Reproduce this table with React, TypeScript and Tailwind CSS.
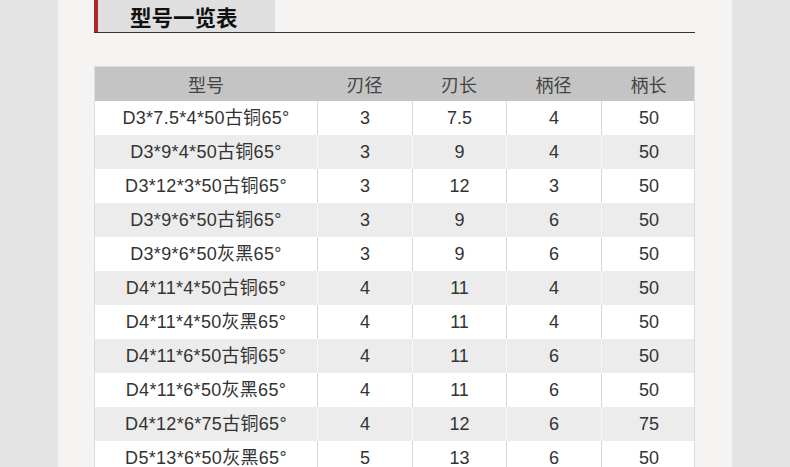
const rows = [
  ["D3*7.5*4*50古铜65°", "3", "7.5", "4", "50"],
  ["D3*9*4*50古铜65°", "3", "9", "4", "50"],
  ["D3*12*3*50古铜65°", "3", "12", "3", "50"],
  ["D3*9*6*50古铜65°", "3", "9", "6", "50"],
  ["D3*9*6*50灰黑65°", "3", "9", "6", "50"],
  ["D4*11*4*50古铜65°", "4", "11", "4", "50"],
  ["D4*11*4*50灰黑65°", "4", "11", "4", "50"],
  ["D4*11*6*50古铜65°", "4", "11", "6", "50"],
  ["D4*11*6*50灰黑65°", "4", "11", "6", "50"],
  ["D4*12*6*75古铜65°", "4", "12", "6", "75"],
  ["D5*13*6*50灰黑65°", "5", "13", "6", "50"],
];

const headers = ["型号", "刃径", "刃长", "柄径", "柄长"];
const cols = "grid grid-cols-[222px_95px_94px_95px_95px]";

export default function App() {
  return (
    <div className="w-full h-[467px] bg-[#e4e4e4] flex justify-center overflow-hidden font-['Liberation_Sans','Noto_Sans_CJK_SC',sans-serif]">
      <div className="w-[674px] h-full bg-[#f5f4f2] pl-[36px] pr-[37px]">
        {/* title bar */}
        <div className="flex h-[33px] border-b border-[#333]">
          <div className="w-[4px] bg-[#b4222b]" />
          <div className="w-[177px] bg-[#dfdfdf] pl-[32px] pt-[1px] flex items-center">
            <span className="text-[21.5px] font-bold text-[#111] font-['Noto_Sans_CJK_SC',sans-serif] leading-none">
              型号一览表
            </span>
          </div>
        </div>

        {/* table */}
        <div className="mt-[33px] border border-[#dcdcdc] border-b-0">
          <div className={`${cols} h-[34px] bg-[#c4c4c4] text-[#444] text-[18px] font-['Noto_Sans_CJK_SC',sans-serif]`}>
            {headers.map((h) => (
              <div key={h} className="flex items-center justify-center leading-none">
                {h}
              </div>
            ))}
          </div>
          {rows.map((r, i) => {
            const alt = i % 2 === 1;
            return (
              <div
                key={i}
                className={`${cols} h-[34px] text-[18px] text-[#333] ${alt ? "bg-[#ececec]" : "bg-white"}`}
              >
                {r.map((c, j) => (
                  <div
                    key={j}
                    className={`flex items-center justify-center leading-none ${
                      j === 0 ? "tracking-[0.3px]" : ""
                    } ${j > 0 ? (alt ? "border-l border-[#f8f8f8]" : "border-l border-[#d8d8d8]") : ""}`}
                  >
                    {c}
                  </div>
                ))}
              </div>
            );
          })}
        </div>
      </div>
    </div>
  );
}
